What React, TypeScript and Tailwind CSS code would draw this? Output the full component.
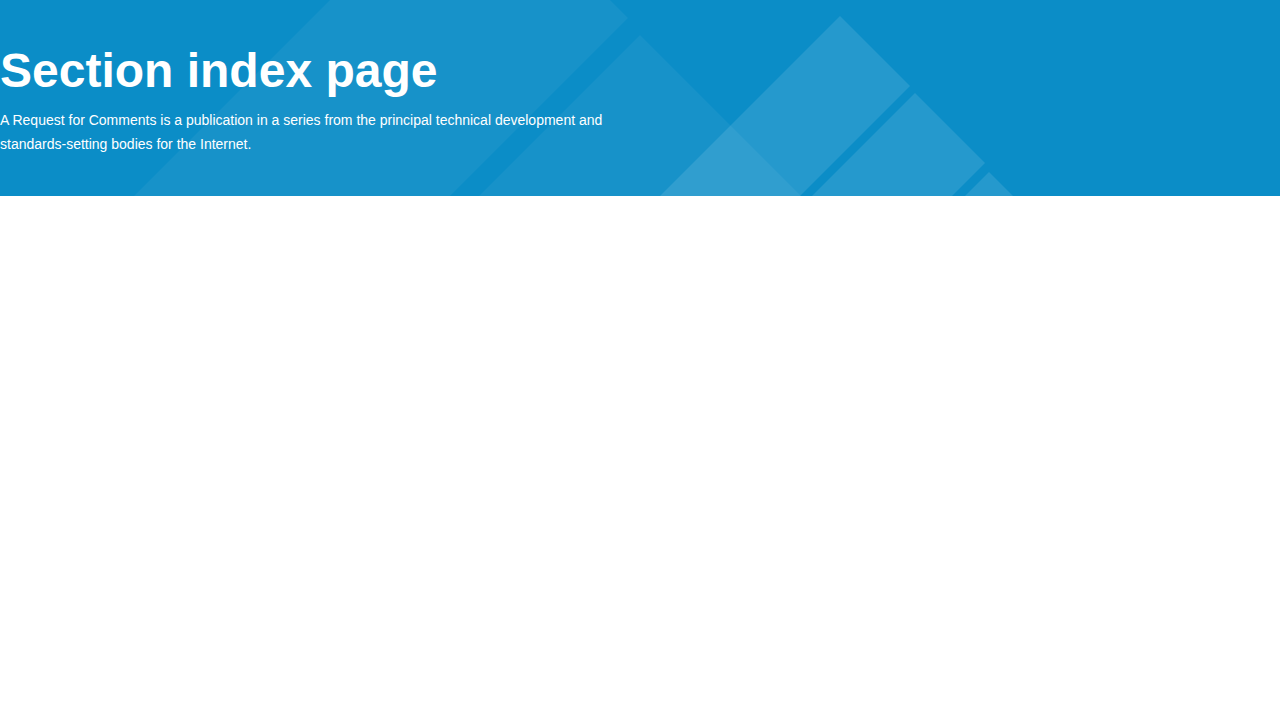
export default function App() {
  return (
    <div className="min-h-screen bg-white" style={{ fontFamily: '"Liberation Sans", Arial, sans-serif' }}>
      <header className="relative h-[196px] overflow-hidden bg-[#0b8dc7]">
        <svg
          className="absolute inset-0 h-full w-full"
          viewBox="0 0 1280 196"
          preserveAspectRatio="none"
          aria-hidden="true"
        >
          <polygon points="330,0 610,0 628,18 450,196 134,196" fill="#ffffff" fillOpacity="0.05" />
          <polygon points="640,35 801,196 479,196" fill="#ffffff" fillOpacity="0.05" />
          <polygon points="840,16 910,86 800,196 660,196" fill="#ffffff" fillOpacity="0.11" />
          <polygon points="915,93 985,163 952,196 812,196" fill="#ffffff" fillOpacity="0.11" />
          <polygon points="989,172 1013,196 965,196" fill="#ffffff" fillOpacity="0.11" />
        </svg>
        <div className="relative pt-[42px]">
          <h1 className="text-[48px] font-bold leading-[58px] text-white">Section index page</h1>
          <p className="mt-[8px] max-w-[640px] text-[14px] leading-[24px] text-white">
            A Request for Comments is a publication in a series from the principal technical development and
            standards-setting bodies for the Internet.
          </p>
        </div>
      </header>
    </div>
  );
}
